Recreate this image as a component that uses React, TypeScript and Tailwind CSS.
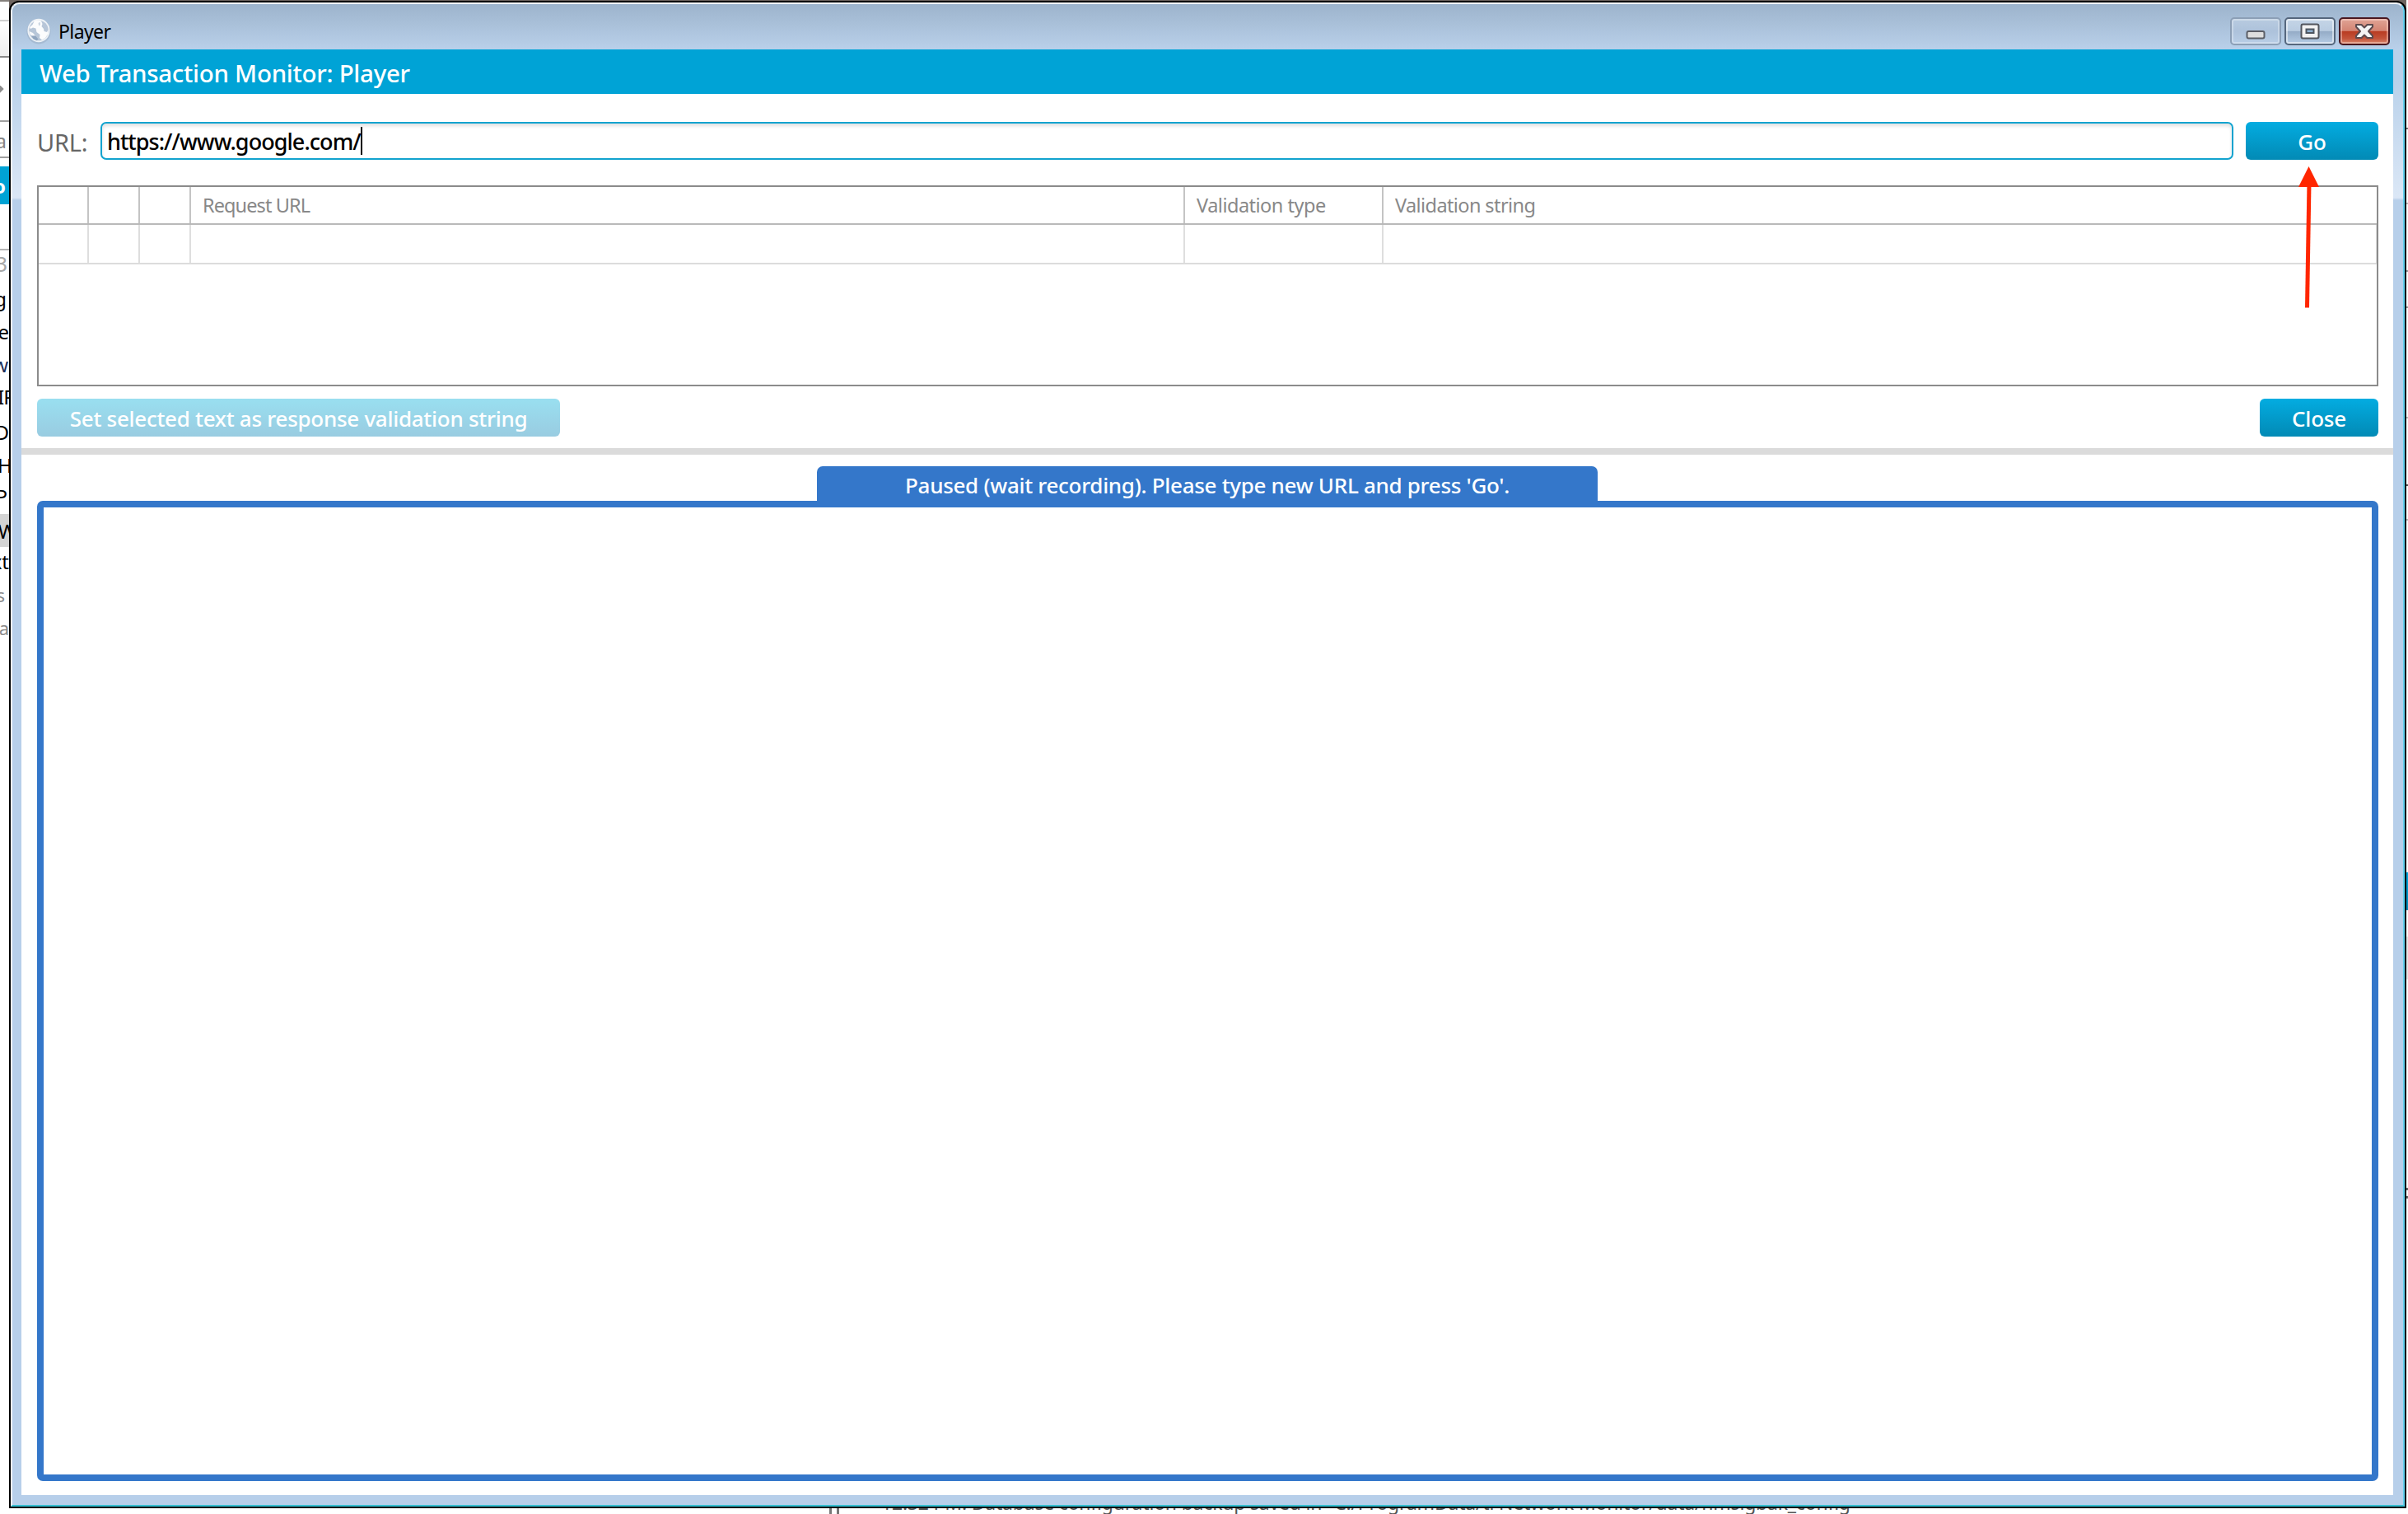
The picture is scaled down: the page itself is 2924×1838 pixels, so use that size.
import React from "react";

type Sliver = { top: string; text: string; tone: string };

const slivers: Sliver[] = [
  { top: "top-[154px]", text: "a", tone: "text-[#858585] text-[24px] right-[3px]" },
  { top: "top-[303px]", text: "3", tone: "text-[#a8a8a8] text-[26px] right-[2px]" },
  { top: "top-[346px]", text: "g", tone: "text-black text-[24px] right-[3px]" },
  { top: "top-[386px]", text: "re", tone: "text-black text-[24px] right-0" },
  { top: "top-[426px]", text: "w", tone: "text-[#1c2f5a] text-[24px] right-[1px]" },
  { top: "top-[465px]", text: "IP", tone: "text-black text-[24px] -left-[3px] tracking-[-1px]" },
  { top: "top-[508px]", text: "D", tone: "text-black text-[24px] right-0" },
  { top: "top-[548px]", text: "H", tone: "text-black text-[24px] -left-[3px]" },
  { top: "top-[586px]", text: "P", tone: "text-black text-[24px] right-[2px]" },
  { top: "top-[628px]", text: "W", tone: "text-black text-[24px] -right-[9px]" },
  { top: "top-[665px]", text: "xt", tone: "text-black text-[24px] right-0" },
  { top: "top-[705px]", text: "s", tone: "text-[#8a8a8a] text-[22px] right-[5px]" },
  { top: "top-[745px]", text: "a", tone: "text-[#8a8a8a] text-[22px] right-0" },
];

function LeftBackdrop() {
  return (
    <div className="relative w-[11px] shrink-0 overflow-hidden bg-white">
      <div className="absolute inset-x-0 top-0 h-[2px] bg-[#85807c]" />
      <div className="absolute inset-x-0 top-[24px] h-[2px] bg-[#cfcfcf]" />
      <div className="absolute inset-x-0 top-[26px] h-[42px] bg-gradient-to-b from-white to-[#eeeeee]" />
      <div className="absolute inset-x-0 top-[68px] h-[2px] bg-[#8a8a8a]" />
      <div className="absolute -left-[5px] top-[104px] size-[8px] rotate-45 bg-[#8d8d8d]" />
      <div className="absolute inset-x-0 top-[146px] h-[2px] bg-[#a0a0a0]" />
      <div className="absolute inset-x-0 top-[190px] h-[2px] bg-[#a0a0a0]" />
      <div className="absolute inset-x-0 top-[202px] h-[46px] bg-[#00a3d5]" />
      <div className="absolute right-[4px] top-[208px] text-[24px] leading-[36px] font-bold text-white">o</div>
      <div className="absolute inset-x-0 top-[302px] h-[2px] bg-[#b5b5b5]" />
      <div className="absolute inset-x-0 top-[624px] h-[40px] bg-[#d4d4d4]" />
      {slivers.map((s, i) => (
        <div key={i} className={`absolute leading-[34px] whitespace-nowrap ${s.top} ${s.tone}`}>
          {s.text}
        </div>
      ))}
    </div>
  );
}

function RightBackdrop() {
  return (
    <div className="relative w-[2px] shrink-0 bg-white">
      <div className="absolute inset-x-0 top-[155px] h-[2px] bg-[#777]" />
      <div className="absolute inset-x-0 top-[246px] h-[2px] bg-[#bbb]" />
      <div className="absolute inset-x-0 top-[328px] h-[2px] bg-[#999]" />
      <div className="absolute inset-x-0 top-[372px] h-[2px] bg-[#999]" />
      <div className="absolute inset-x-0 top-[506px] h-[2px] bg-[#bbb]" />
      <div className="absolute inset-x-0 top-[588px] h-[2px] bg-[#555]" />
      <div className="absolute inset-x-0 top-[630px] h-[2px] bg-[#bbb]" />
      <div className="absolute inset-x-0 top-[1059px] h-[46px] bg-gradient-to-b from-[#00a7e0] to-[#0089b7]" />
      <div className="absolute inset-x-0 top-[1137px] h-[52px] bg-[#e6e6e6]" />
      <div className="absolute inset-x-0 top-[1442px] h-[3px] bg-[#666]" />
      <div className="absolute inset-x-0 top-[1452px] h-[3px] bg-[#666]" />
    </div>
  );
}

function GlobeIcon() {
  return (
    <svg className="h-[32px] w-[30px]" viewBox="0 0 30 32">
      <ellipse cx="15" cy="16.5" rx="14.5" ry="15" fill="#8fa3ba" opacity="0.4" />
      <ellipse cx="15" cy="15" rx="13.6" ry="14.2" fill="#eef2f6" />
      <ellipse cx="15" cy="15" rx="11.8" ry="12.3" fill="#b7c6d8" />
      <path
        d="M10 3 L15 2.4 L18 3.6 L19.5 7 L18.5 10 L21 13 L21.5 16 L25 17 L26.5 14 L26.5 19 L23 24 L19 26.5 L16 24 L16.5 20 L12.5 17 L11.5 12.5 L8 11.5 L5 13 L4 11 L7.5 8 Z"
        fill="#fbfcfd"
      />
      <path d="M3.5 16 L8 18 L10.5 21 L7 21.5 L4.5 20 Z" fill="#f7f9fb" />
      <path d="M6 21.5 L11.5 22 L14.5 25.5 L12.5 27.3 L8.5 25.3 Z" fill="#8fa5bf" />
      <path d="M14.5 6 L16.8 4.8 L17 8 L15.2 9.5 Z" fill="#cbd6e2" />
    </svg>
  );
}

function CaptionButtons() {
  return (
    <div className="flex gap-[4px]">
      <div className="flex h-[34px] w-[62px] items-center justify-center rounded-[5px] border-2 border-[#8c9fb6] bg-gradient-to-b from-[#b8cbe0] via-[#adc2db] to-[#b9cee6] shadow-[inset_0_0_0_2px_rgba(255,255,255,0.3)]">
        <svg className="h-[24px] w-[40px]" viewBox="0 0 40 24">
          <rect x="9.5" y="12" width="21" height="8.5" rx="2" fill="#dedede" stroke="#5b5e66" strokeWidth="2" />
        </svg>
      </div>
      <div className="flex h-[34px] w-[62px] items-center justify-center rounded-[5px] border-2 border-[#56677d] bg-[linear-gradient(#c5d5e7_0%,#b9cce1_48%,#94abc6_50%,#b5cce5_100%)] shadow-[inset_0_0_0_2px_rgba(255,255,255,0.5)]">
        <svg className="h-[24px] w-[40px]" viewBox="0 0 40 24">
          <rect x="9.5" y="3.5" width="21" height="17" rx="2" fill="#f2f2f2" stroke="#53565e" strokeWidth="2" />
          <rect x="15.5" y="9.5" width="9" height="4.5" fill="#8fb0d0" stroke="#4e5660" strokeWidth="2" />
        </svg>
      </div>
      <div className="flex h-[34px] w-[62px] items-center justify-center rounded-[5px] border-2 border-[#4a1820] bg-[linear-gradient(#e0a496_0%,#d38473_48%,#b83a20_50%,#c4553c_80%,#d98970_100%)] shadow-[inset_0_0_0_2px_rgba(255,220,210,0.45)]">
        <svg className="h-[24px] w-[40px]" viewBox="0 0 40 24">
          <path
            d="M10 4 H16.5 L20 7.5 L23.5 4 H30 V6.5 L25 12 L30 17.5 V20 H23.5 L20 16.5 L16.5 20 H10 V17.5 L15 12 L10 6.5 Z"
            fill="#f4f4f4"
            stroke="#5c4a4e"
            strokeWidth="2"
            strokeLinejoin="round"
          />
        </svg>
      </div>
    </div>
  );
}

function TitleBar() {
  return (
    <div className="-mr-[12px] -ml-[11px] flex h-[55px] shrink-0 items-start justify-between rounded-t-[9px] bg-gradient-to-b from-[#9db4cc] to-[#b9d0ea] pr-[16px] pl-[17px]">
      <div className="flex items-center pt-[15px]">
        <GlobeIcon />
        <span className="ml-[9px] pt-px text-[23px] leading-[34px] tracking-[-0.6px] text-black">Player</span>
      </div>
      <div className="pt-[16px]">
        <CaptionButtons />
      </div>
    </div>
  );
}

function PrimaryButton({ children, className }: { children: React.ReactNode; className: string }) {
  return (
    <button
      className={`flex h-[46px] items-center justify-center rounded-[6px] bg-gradient-to-b from-[#03ace1] to-[#028ab5] pt-[3px] text-[26px] font-medium tracking-[-0.2px] text-white ${className}`}
    >
      {children}
    </button>
  );
}

const columns = [
  { label: "", spacing: "" },
  { label: "", spacing: "" },
  { label: "", spacing: "" },
  { label: "Request URL", spacing: "tracking-[-0.9px]" },
  { label: "Validation type", spacing: "tracking-[-0.5px]" },
  { label: "Validation string", spacing: "tracking-[-0.6px]" },
];

function RequestTable() {
  return (
    <div className="relative mt-[31px] ml-[19px] h-[244px] w-[2843px] shrink-0 border-2 border-[#8b8b8b]">
      <div className="grid h-[46px] grid-cols-[61px_62px_62px_1207px_241px_1fr] border-b-2 border-[#b9b9b9]">
        {columns.map((column, i) => (
          <div
            key={i}
            className={`flex items-center border-r-2 border-[#c4c4c4] pt-[2px] pl-[14px] text-[23.5px] whitespace-nowrap text-[#888] last:border-r-0 ${column.spacing}`}
          >
            {column.label}
          </div>
        ))}
      </div>
      <div className="grid h-[48px] grid-cols-[61px_62px_62px_1207px_241px_1fr] border-r border-b-2 border-[#dcdcdc]">
        {columns.map((_, i) => (
          <div key={i} className="border-r-2 border-[#dedede] last:border-r-0" />
        ))}
      </div>
      <svg className="absolute -top-[25px] right-[69px] h-[172px] w-[26px]" viewBox="0 0 26 172">
        <path d="M10.5 20 L15.5 20 L13 171.5 L8 171.5 Z" fill="#ff2600" />
        <path d="M12.5 0 L25 25 L0 25 Z" fill="#ff2600" />
      </svg>
    </div>
  );
}

export default function App() {
  return (
    <div className="flex h-[1838px] w-[2924px] flex-col overflow-hidden bg-white font-['Noto_Sans',sans-serif]">
      <div className="flex h-[1831px] shrink-0 bg-[#6e6560]">
        <LeftBackdrop />
        <div className="mt-[1px] flex flex-1 rounded-t-[12px] border-2 border-black bg-black">
          <div className="flex flex-1 flex-col rounded-t-[10px] border-2 border-t-[#f2f6fa] border-r-[#63d0ee] border-b-[#35bfd2] border-l-[#eef4fa] bg-[linear-gradient(#b9d1ea_0px,#b9d1ea_90px,#dbe7f6_235px,#b7cfea_238px)] pr-[12px] pl-[11px]">
            <TitleBar />
            <div className="flex h-[54px] shrink-0 items-center bg-[#00a3d6] pt-[4px] pl-[22px] text-[29.5px] font-medium tracking-[-0.28px] text-white">
              Web Transaction Monitor: Player
            </div>
            <div className="flex h-[1701px] shrink-0 flex-col bg-white">
              <div className="mt-[34px] flex h-[46px] shrink-0 items-center">
                <span className="w-[96px] pt-[3px] pl-[19px] text-[29px] tracking-[-0.2px] text-[#666]">URL:</span>
                <div className="flex h-[46px] w-[2590px] items-center rounded-[7px] border-2 border-[#12a3cf] pl-[6px] text-[27px] text-black shadow-[inset_0_3px_4px_rgba(0,0,0,0.12)]">
                  <span className="pt-[3px] font-medium tracking-[-0.95px]">https://www.google.com/</span>
                  <span className="h-[34px] w-[2px] bg-black" />
                </div>
                <PrimaryButton className="ml-[15px] w-[161px]">Go</PrimaryButton>
              </div>
              <RequestTable />
              <div className="mt-[15px] mr-[18px] ml-[19px] flex shrink-0 justify-between">
                <button className="flex h-[46px] w-[635px] items-center justify-center rounded-[6px] bg-gradient-to-b from-[#99dff0] to-[#99cce1] pt-[3px] text-[26px] font-medium tracking-[-0.28px] text-white">
                  Set selected text as response validation string
                </button>
                <PrimaryButton className="w-[144px]">Close</PrimaryButton>
              </div>
              <div className="mt-[14px] h-[8px] shrink-0 bg-[#dbdbdb]" />
              <div className="mt-[14px] ml-[966px] flex h-[43px] w-[948px] shrink-0 items-center justify-center rounded-t-[7px] bg-[#3477ca] pt-[3px] text-[26px] font-medium tracking-[-0.3px] text-white">
                Paused (wait recording). Please type new URL and press 'Go'.
              </div>
              <div className="-mt-px mr-[18px] ml-[19px] h-[1190px] shrink-0 rounded-[7px] border-8 border-[#3477ca] bg-white" />
            </div>
          </div>
        </div>
        <RightBackdrop />
      </div>
      <div className="relative h-[7px] shrink-0 overflow-hidden bg-white">
        <div className="absolute top-0 left-[1007px] h-[7px] w-[12px] border-x-[3px] border-[#777]" />
        <div className="absolute -top-[24px] left-[1070px] text-[23px] leading-[34px] tracking-[-0.2px] whitespace-nowrap text-[#555]">
          12:32 PM: Database configuration backup saved in "C:/ProgramData/tl Network Monitor/data/nmsigbak_config
        </div>
      </div>
    </div>
  );
}
